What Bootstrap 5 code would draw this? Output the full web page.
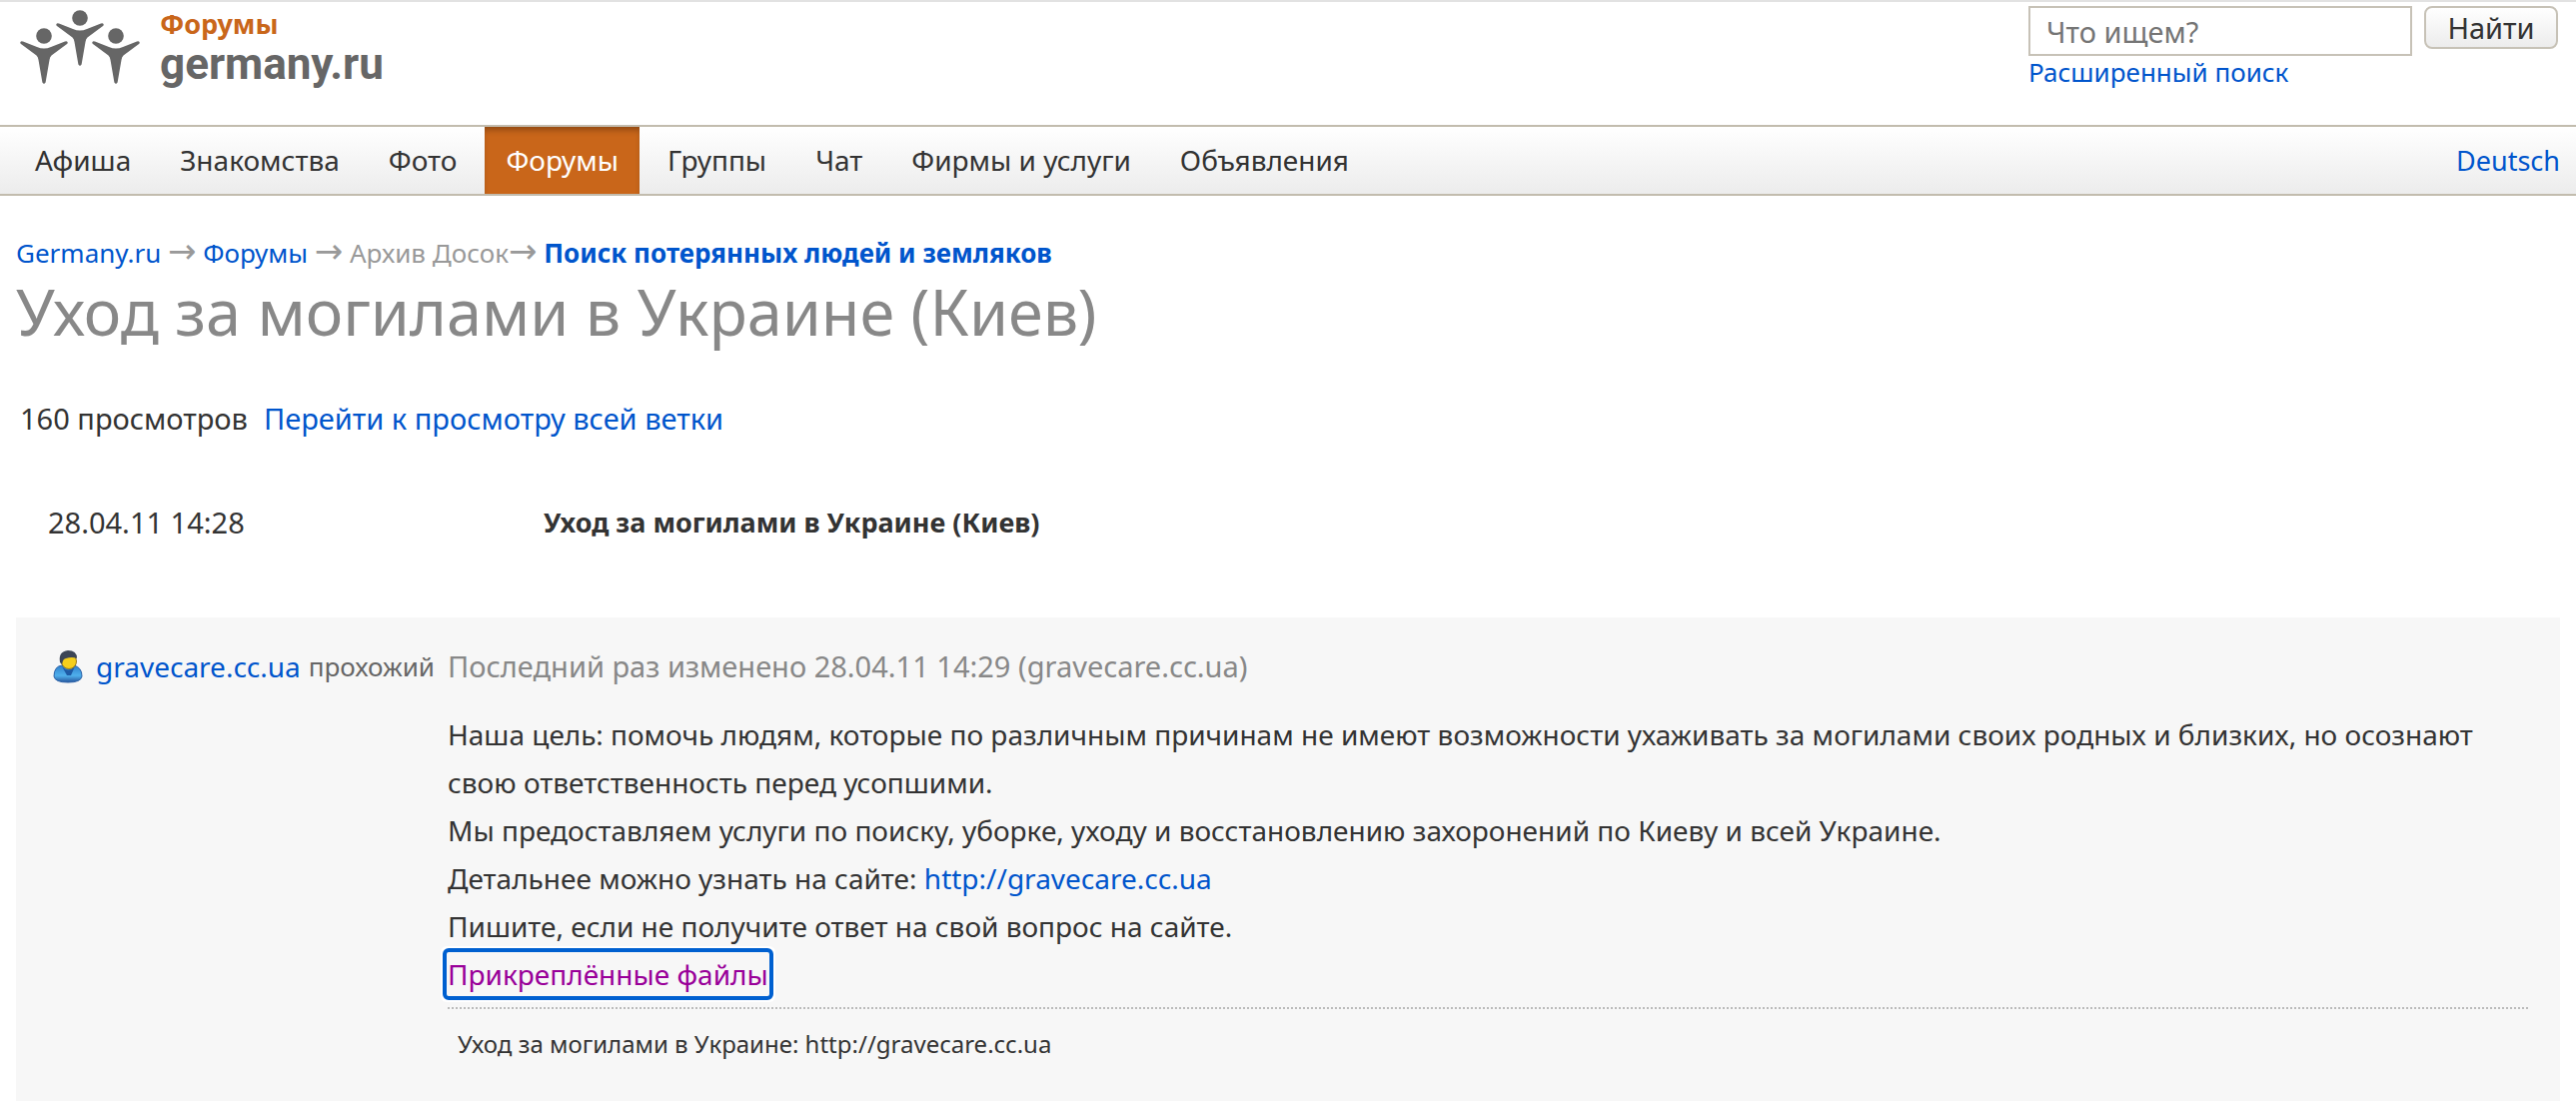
<!DOCTYPE html>
<html lang="ru">
<head>
<meta charset="utf-8">
<meta name="viewport" content="width=device-width, initial-scale=1">
<title>Уход за могилами в Украине (Киев)</title>
<link href="https://cdn.jsdelivr.net/npm/bootstrap@5.3.0/dist/css/bootstrap.min.css" rel="stylesheet">
<style>
  body { font-family: "Noto Sans", sans-serif; font-size: 28px; line-height: 48px; color: #333; background: #fff; }
  a { color: #0055cc; text-decoration: none; }
  .site-header { border-top: 2px solid #e2e2e2; height: 125px; padding: 4px 18px 0 16px; }
  .brand-mark { width: 128px; height: 80px; }
  .brand-section { font-size: 27px; font-weight: 700; line-height: 36px; color: #c9661a; }
  .brand-name { font-family: Roboto, sans-serif; font-size: 44px; font-weight: 700; line-height: 44px; color: #666; }
  .search-input { width: 384px; height: 50px; font-size: 29px; line-height: 32px; border: 2px solid #c7c2b7; border-radius: 0; padding: 0 16px; color: #333; }
  .search-input::placeholder { color: #757575; }
  .search-btn { height: 43px; width: 134px; margin-left: 12px; padding: 0; font-size: 29px; line-height: 36px; color: #333; border: 2px solid #c7c2b7; border-radius: 8px; background: linear-gradient(#fff, #ececec); }
  .search-more { font-size: 26px; line-height: 32px; }
  .main-nav { border-top: 2px solid #c2bcae; border-bottom: 2px solid #c2bcae; background: linear-gradient(#fff, #ececec); padding: 0 16px 0 14px; }
  .main-nav .nav { gap: 7px; }
  .main-nav .nav-link { color: #333; padding: 0 21px; line-height: 67px; }
  .main-nav .nav-link.active { color: #fff; background: #c9661a; box-shadow: inset 0 5px 6px -2px rgba(0,0,0,.3); }
  .lang-link { font-size: 27px; }
  .content-area { padding: 37px 16px 0; }
  .crumbs { font-size: 26px; line-height: 40px; color: #999; }
  .crumb-arrow { font-family: "DejaVu Sans", sans-serif; font-size: 34px; line-height: 32px; }
  .topic-title { font-size: 63px; line-height: 72px; font-weight: 400; color: #888; margin: 3px 0 47px; }
  .topic-stats { font-size: 29px; padding-left: 4px; gap: 16px; margin-bottom: 56px; }
  .post-head { font-size: 27px; padding-left: 32px; margin-bottom: 71px; }
  .post-date { font-size: 29px; width: 496px; }
  .post-panel { background: #f7f7f7; padding: 25px 32px 60px 36px; }
  .post-author { width: 396px; }
  .post-author svg { width: 32px; height: 34px; margin-right: 12px; }
  .author-role { font-size: 26px; color: #666; margin-left: 8px; }
  .post-edited { font-size: 29px; color: #888; margin-bottom: 20px; }
  .attach-link { color: #990099; padding: 3px 1px; margin: 0 -1px; border-radius: 2px; outline: 4px solid #0060d0; box-shadow: 0 0 0 6px #fff; }
  .post-sign { font-size: 24px; margin-top: 9px; border-top: 2px dotted #bbb; padding: 11px 10px 0; }
</style>
</head>
<body>
<header class="site-header d-flex justify-content-between">
  <a class="d-flex" href="#" aria-label="Форумы germany.ru">
    <svg class="brand-mark flex-shrink-0" viewBox="16 6 128 80" fill="#666" aria-hidden="true">
      <defs>
        <g id="person">
          <circle r="7.8"/>
          <path d="M-23.8 6.8Q-23.5 4.6-21 5.6L-7 11Q0 14 7 11L21 5.6Q23.5 4.6 23.8 6.8Q23.8 8 22 8.8L7.500 19.500Q5.800 21 5.500 24L1.600 46.500Q0 49-1.600 46.500L-5.500 24Q-5.800 21-7.500 19.500L-22 8.800Q-23.800 8-23.800 6.800Z"/>
        </g>
      </defs>
      <use href="#person" x="80" y="18"/>
      <use href="#person" x="44" y="36"/>
      <use href="#person" x="116" y="36"/>
    </svg>
    <span class="d-flex flex-column ps-3">
      <span class="brand-section">Форумы</span>
      <span class="brand-name">germany.ru</span>
    </span>
  </a>
  <form>
    <div class="d-flex align-items-start">
      <input class="search-input" type="search" placeholder="Что ищем?" aria-label="Что ищем?">
      <button class="search-btn" type="button">Найти</button>
    </div>
    <a class="search-more d-block" href="#">Расширенный поиск</a>
  </form>
</header>

<nav class="main-nav d-flex justify-content-between align-items-center">
  <ul class="nav">
    <li class="nav-item"><a class="nav-link" href="#">Афиша</a></li>
    <li class="nav-item"><a class="nav-link" href="#">Знакомства</a></li>
    <li class="nav-item"><a class="nav-link" href="#">Фото</a></li>
    <li class="nav-item"><a class="nav-link active" aria-current="page" href="#">Форумы</a></li>
    <li class="nav-item"><a class="nav-link" href="#">Группы</a></li>
    <li class="nav-item"><a class="nav-link" href="#">Чат</a></li>
    <li class="nav-item"><a class="nav-link" href="#">Фирмы и услуги</a></li>
    <li class="nav-item"><a class="nav-link" href="#">Объявления</a></li>
  </ul>
  <a class="lang-link" href="#">Deutsch</a>
</nav>

<main class="content-area">
  <div class="crumbs"><a href="#">Germany.ru</a> <span class="crumb-arrow">→</span> <a href="#">Форумы</a> <span class="crumb-arrow">→</span> Архив Досок<span class="crumb-arrow">→</span> <a class="fw-bold" href="#">Поиск потерянных людей и земляков</a></div>
  <h1 class="topic-title">Уход за могилами в Украине (Киев)</h1>
  <div class="topic-stats d-flex"><span>160 просмотров</span><a href="#">Перейти к просмотру всей ветки</a></div>
  <div class="post-head d-flex"><span class="post-date flex-shrink-0">28.04.11 14:28</span><strong>Уход за могилами в Украине (Киев)</strong></div>
  <article class="post-panel d-flex">
    <div class="post-author d-flex align-items-center align-self-start flex-shrink-0 text-nowrap">
      <svg viewBox="0 0 32 34" aria-hidden="true">
        <defs>
          <linearGradient id="coat" x1="0" y1="0" x2="0" y2="1"><stop offset="0" stop-color="#2f7fcb"/><stop offset=".6" stop-color="#4fb0ec"/><stop offset="1" stop-color="#27559c"/></linearGradient>
        </defs>
        <path d="M2 27Q2 17 10 16H22Q30 18 30 27Q29 33 16 33Q3 33 2 27Z" fill="url(#coat)" stroke="#2b62a8"/>
        <path d="M10 17Q16 24 23 17L19 26H15Z" fill="#1e5aa5"/>
        <ellipse cx="17" cy="12" rx="7.500" ry="7.500" fill="#f5cf1c" stroke="#9a7a18"/>
        <path d="M8 13Q6 2 16 1Q25 1 25 9Q20 7 14 9Q11 9 10 15Z" fill="#3d4656"/>
      </svg>
      <a href="#">gravecare.cc.ua</a><span class="author-role">прохожий</span>
    </div>
    <div class="flex-grow-1">
      <div class="post-edited">Последний раз изменено 28.04.11 14:29 (gravecare.cc.ua)</div>
      <div>
        Наша цель: помочь людям, которые по различным причинам не имеют возможности ухаживать за могилами своих родных и близких, но осознают свою ответственность перед усопшими.<br>
        Мы предоставляем услуги по поиску, уборке, уходу и восстановлению захоронений по Киеву и всей Украине.<br>
        Детальнее можно узнать на сайте: <a href="#">http://gravecare.cc.ua</a><br>
        Пишите, если не получите ответ на свой вопрос на сайте.<br>
        <a class="attach-link" href="#">Прикреплённые файлы</a>
      </div>
      <div class="post-sign">Уход за могилами в Украине: http://gravecare.cc.ua</div>
    </div>
  </article>
</main>
<script src="https://cdn.jsdelivr.net/npm/bootstrap@5.3.0/dist/js/bootstrap.bundle.min.js"></script>
</body>
</html>
